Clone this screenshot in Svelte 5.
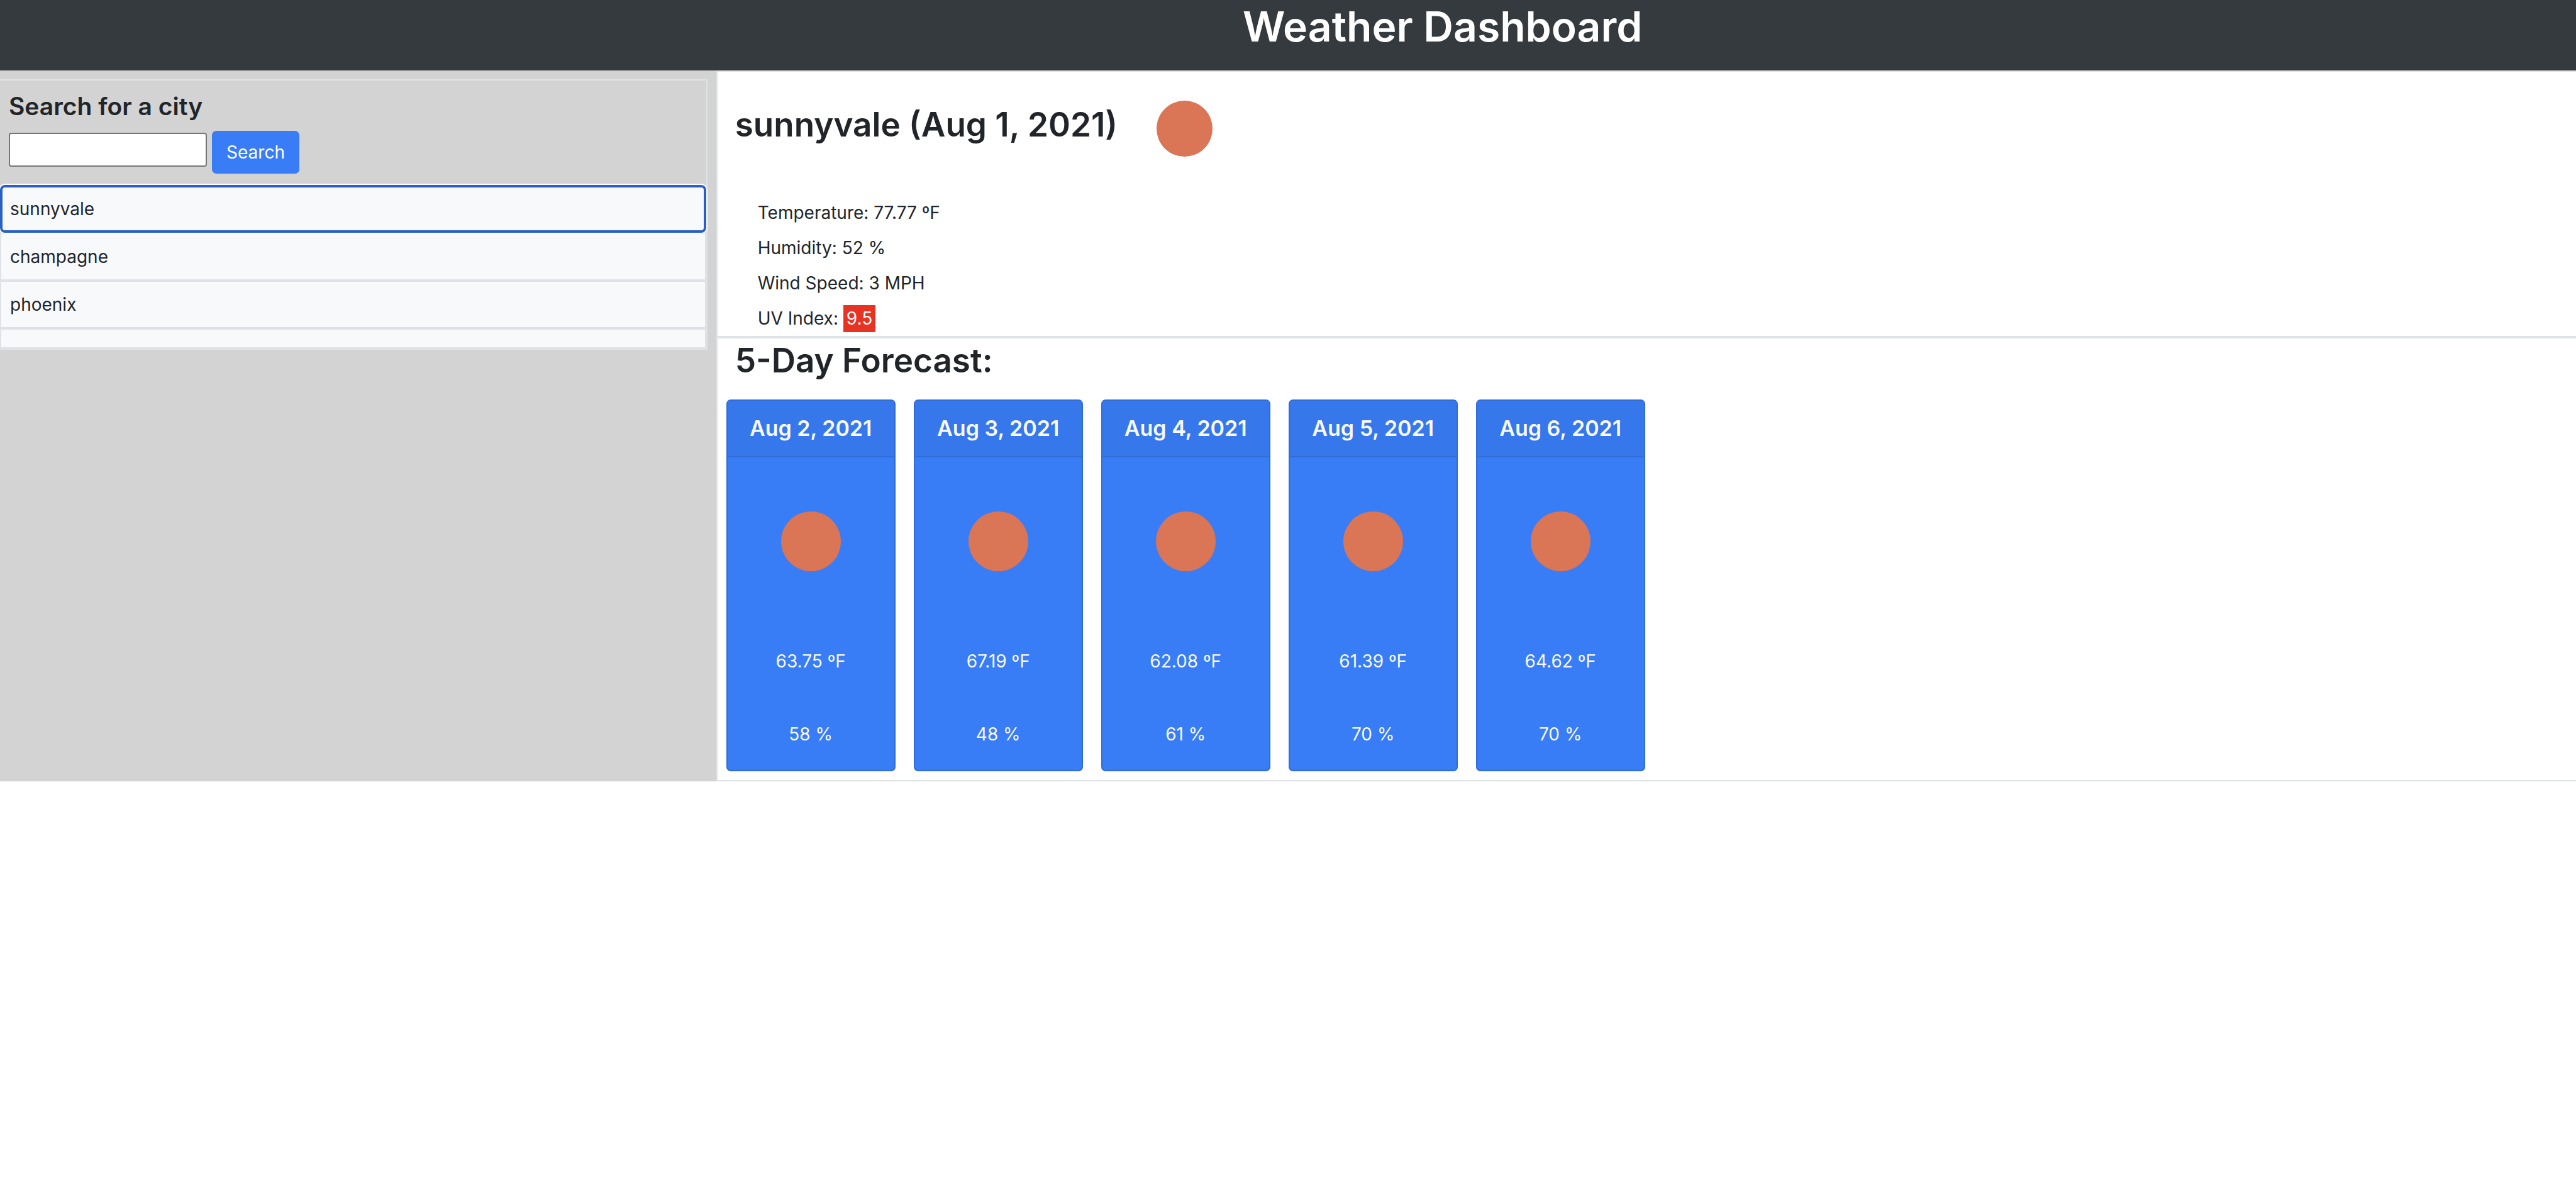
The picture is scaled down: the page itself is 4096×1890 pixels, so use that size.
<script>
  const cities = ['sunnyvale', 'champagne', 'phoenix'];
  const forecast = [
    { date: 'Aug 2, 2021', temp: '63.75', humidity: 58 },
    { date: 'Aug 3, 2021', temp: '67.19', humidity: 48 },
    { date: 'Aug 4, 2021', temp: '62.08', humidity: 61 },
    { date: 'Aug 5, 2021', temp: '61.39', humidity: 70 },
    { date: 'Aug 6, 2021', temp: '64.62', humidity: 70 }
  ];
  let selected = $state('sunnyvale');
  let query = $state('');
</script>

<header class="top">
  <h1>Weather Dashboard</h1>
</header>

<div class="layout">
  <aside class="sidebar">
    <div class="panel">
      <form class="search" onsubmit={(e) => e.preventDefault()}>
        <h2><label for="city">Search for a city</label></h2>
        <div class="search-row">
          <input id="city" type="text" bind:value={query} />
          <button class="search-button" type="submit">Search</button>
        </div>
      </form>
      <div class="cities">
        {#each cities as city}
          <button class="city" class:selected={selected === city} type="button" onclick={() => (selected = city)}>{city}</button>
        {/each}
        <div class="city-end"></div>
      </div>
    </div>
  </aside>

  <main class="content">
    <section class="current">
      <div class="current-title">
        <h2>sunnyvale (Aug 1, 2021)</h2>
        <svg class="sun" viewBox="0 0 100 100" role="img" aria-label="Clear sky"><circle cx="50" cy="50" r="50" /></svg>
      </div>
      <ul class="readings">
        <li>Temperature: 77.77 ºF</li>
        <li>Humidity: 52 %</li>
        <li>Wind Speed: 3 MPH</li>
        <li>UV Index: <span class="uv">9.5</span></li>
      </ul>
    </section>

    <section class="forecast">
      <h2>5-Day Forecast:</h2>
      <div class="cards">
        {#each forecast as day}
          <article class="card">
            <h3>{day.date}</h3>
            <div class="card-body">
              <svg class="card-sun" viewBox="0 0 100 100" role="img" aria-label="Clear sky"><circle cx="50" cy="50" r="50" /></svg>
              <p>{day.temp} ºF</p>
              <p>{day.humidity} %</p>
            </div>
          </article>
        {/each}
      </div>
    </section>
  </main>
</div>

<style>
  :global(body) {
    margin: 0;
    background: #fff;
    color: #212529;
    font-family: Inter, "Liberation Sans", sans-serif;
    font-size: 28px;
    line-height: 44px;
  }
  :global(*) {
    box-sizing: border-box;
  }
  h1, h2, h3, p, ul {
    margin: 0;
    padding: 0;
    font-weight: 600;
  }
  p, ul {
    font-weight: 400;
  }
  button, input {
    font: inherit;
    color: inherit;
    margin: 0;
  }
  svg {
    display: block;
    fill: #da7556;
  }
  .top {
    height: 112px;
    padding-left: 12%;
    background: #353a3e;
    color: #fff;
    text-align: center;
  }
  h1 {
    font-size: 66px;
    line-height: 84px;
  }
  .layout {
    display: flex;
    align-items: stretch;
  }
  .sidebar {
    flex: 0 0 27.8%;
    padding: 14px 14px 0 0;
    background: #d3d3d3;
  }
  .panel {
    border: 2px solid #dee2e6;
    border-left: 0;
  }
  .search {
    height: 166px;
    padding: 14px 14px 0;
  }
  .search h2 {
    font-size: 39px;
    line-height: 54px;
  }
  .search-row {
    display: flex;
    align-items: flex-start;
    gap: 8px;
    padding-top: 12px;
  }
  .search-row input {
    width: 315px;
    height: 54px;
    margin-top: 3px;
    padding: 2px 6px;
    border: 2px solid #767676;
    border-radius: 4px;
    background: #fff;
  }
  .search-button {
    width: 139px;
    height: 68px;
    padding: 0;
    border: 0;
    border-radius: 7px;
    background: #397df6;
    color: #fff;
  }
  .cities {
    display: flex;
    flex-direction: column;
  }
  .city {
    height: 76px;
    padding: 0 14px;
    border: 2px solid #dee2e6;
    background: #f8f9fb;
    text-align: left;
  }
  .city.selected {
    position: relative;
    padding: 0 12px;
    border: 4px solid #2a60c6;
    border-radius: 8px;
    box-shadow: 0 0 0 2px #fff;
  }
  .city-end {
    height: 32px;
    border: 2px solid #dee2e6;
    background: #f8f9fb;
  }
  .content {
    flex: 1;
    min-width: 0;
    border: 2px solid #dee2e6;
    border-right: 0;
  }
  .current {
    padding: 46px 28px 0;
    border-bottom: 2px solid #dee2e6;
  }
  .current-title {
    display: flex;
    align-items: flex-start;
    gap: 62px;
  }
  h2 {
    font-size: 53px;
    line-height: 76px;
  }
  .sun {
    width: 89px;
    height: 89px;
  }
  .readings {
    list-style: none;
    padding: 61px 0 0 36px;
    line-height: 56px;
  }
  .readings li {
    height: 56px;
  }
  .uv {
    display: inline-block;
    padding: 0 5px;
    line-height: 43px;
    background: #e73323;
    color: #fff;
  }
  .forecast {
    border-top: 2px solid #dee2e6;
    padding: 0 14px 14px;
  }
  .forecast h2 {
    padding: 0 14px;
    line-height: 70px;
  }
  .cards {
    display: flex;
    gap: 29px;
    padding-top: 27px;
  }
  .card {
    width: 269px;
    border: 2px solid #2f6cd5;
    border-radius: 7px;
    background: #397df6;
    color: #f8f9fa;
    text-align: center;
  }
  .card h3 {
    padding: 14px 0;
    border-bottom: 2px solid #306dd8;
    background: #3678ec;
    font-size: 34px;
    line-height: 60px;
  }
  .card-body {
    padding: 86px 0 35px;
  }
  .card-sun {
    width: 95px;
    height: 95px;
    margin: 0 auto 121px;
  }
  .card-body p + p {
    margin-top: 72px;
  }
</style>
